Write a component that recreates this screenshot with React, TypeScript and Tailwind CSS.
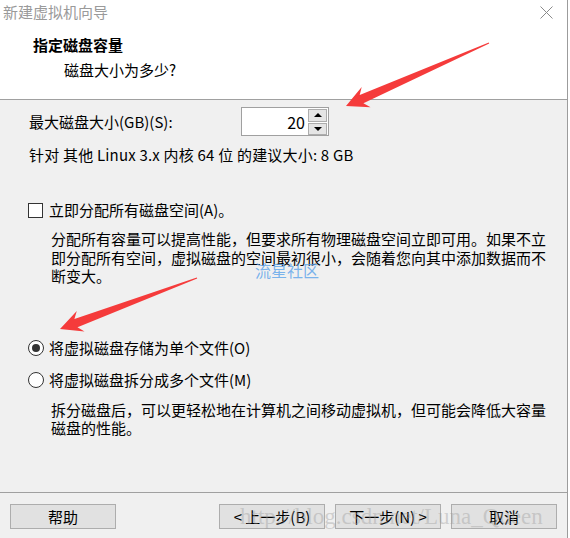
import React from 'react';

const arrowPoints = (tx: number, ty: number, px: number, py: number) => {
    // tip at (px,py), tail at (tx,ty)
    const dx = tx - px;
    const dy = ty - py;
    const len = Math.sqrt(dx * dx + dy * dy);
    const ux = dx / len;
    const uy = dy / len;
    const nx = -uy;
    const ny = ux;
    const pt = (a: number, b: number) => `${(px + ux * a + nx * b).toFixed(1)},${(py + uy * a + ny * b).toFixed(1)}`;
    return [
        pt(0, 0),
        pt(22, -11),
        pt(17, -4.5),
        pt(len, -0.6),
        pt(len, 0.6),
        pt(17, 4.5),
        pt(22, 11),
    ].join(' ');
};

const WizardButton: React.FC<{ label: string; className?: string }> = ({ label, className }) => (
    <button type="button" className={`h-[25px] w-[106px] border border-[#adadad] bg-[#e1e1e1] text-[15px] leading-none text-black ${className ?? ''}`}>
        {label}
    </button>
);

const Radio: React.FC<{ checked?: boolean }> = ({ checked }) => (
    <span className="flex h-[16px] w-[16px] items-center justify-center rounded-full border border-[#333333] bg-white">
        {checked && <span className="h-[8px] w-[8px] rounded-full bg-[#333333]" />}
    </span>
);

const App: React.FC = () => {
    return (
        <div className="relative flex h-[538px] w-[570px] overflow-hidden bg-white font-['Noto_Sans_CJK_SC',sans-serif] text-[15px] text-black">
            <div className="flex h-full w-[568px] flex-col border-r border-[#9c9c9c] bg-[#f0f0f0]">
                {/* header */}
                <div className="flex h-[100px] flex-col border-b border-[#a0a0a0] bg-white">
                    <div className="flex h-[24px] items-center justify-between pl-[3px] pr-[14px]">
                        <span className="leading-[20px] text-[#9a9a9a]">新建虚拟机向导</span>
                        <svg width="13" height="13" viewBox="0 0 13 13">
                            <path d="M0.5 0.5 L12.5 12.5 M12.5 0.5 L0.5 12.5" stroke="#8a8a8a" strokeWidth="1" />
                        </svg>
                    </div>
                    <div className="mt-[11px] pl-[33px] font-bold leading-[20px]">指定磁盘容量</div>
                    <div className="mt-[5px] pl-[64px] leading-[20px]">磁盘大小为多少?</div>
                </div>

                {/* body */}
                <div className="mt-[7px] flex h-[29px] items-center">
                    <span className="w-[241px] shrink-0 pl-[29px] leading-[20px]">最大磁盘大小(GB)(S):</span>
                    <div className="flex h-[29px] w-[88px] items-center border border-[#a0a0a0] bg-white">
                        <span className="flex-1 pr-[3px] text-right text-[16px] leading-[20px]">20</span>
                        <div className="mr-[1px] flex flex-col gap-[1px]">
                            <span className="flex h-[13px] w-[19px] items-center justify-center border border-[#adadad] bg-[#e5e5e5]">
                                <svg width="8" height="4" viewBox="0 0 8 4"><path d="M0 4 L4 0 L8 4 Z" fill="#000" /></svg>
                            </span>
                            <span className="flex h-[12px] w-[19px] items-center justify-center border border-[#adadad] bg-[#e5e5e5]">
                                <svg width="8" height="4" viewBox="0 0 8 4"><path d="M0 0 L8 0 L4 4 Z" fill="#000" /></svg>
                            </span>
                        </div>
                    </div>
                </div>
                <div className="mt-[9px] pl-[29px] leading-[20px] tracking-[0.2px]">针对 其他 Linux 3.x 内核 64 位 的建议大小: 8 GB</div>

                <div className="mt-[35px] flex items-center gap-[6px] pl-[28px] leading-[20px]">
                    <span className="h-[15px] w-[15px] border border-[#333333] bg-white" />
                    <span>立即分配所有磁盘空间(A)。</span>
                </div>
                <p className="mt-[10px] pl-[51px] pr-[20px] leading-[18.5px]">
                    分配所有容量可以提高性能，但要求所有物理磁盘空间立即可用。如果不立即分配所有空间，虚拟磁盘的空间最初很小，会随着您向其中添加数据而不断变大。
                </p>

                <div className="mt-[52px] flex items-center gap-[5px] pl-[28px] leading-[20px]">
                    <Radio checked />
                    <span>将虚拟磁盘存储为单个文件(O)</span>
                </div>
                <div className="mt-[12px] flex items-center gap-[5px] pl-[28px] leading-[20px]">
                    <Radio />
                    <span>将虚拟磁盘拆分成多个文件(M)</span>
                </div>
                <p className="mt-[11px] pl-[51px] pr-[20px] leading-[18.5px]">
                    拆分磁盘后，可以更轻松地在计算机之间移动虚拟机，但可能会降低大容量磁盘的性能。
                </p>

                {/* footer */}
                <div className="mt-auto flex h-[46px] border-t border-[#a0a0a0] pl-[10px] pr-[10px] pt-[11px]">
                    <WizardButton label="帮助" className="w-[104px]" />
                    <div className="flex-1" />
                    <div className="flex gap-[10px]">
                        <WizardButton label="< 上一步(B)" />
                        <WizardButton label="下一步(N) >" />
                        <WizardButton label="取消" />
                    </div>
                </div>
            </div>

            {/* watermarks */}
            <span className="pointer-events-none absolute left-[255px] top-[260px] text-[16px] leading-[20px] text-[#5aa2ea]/80">流星社区</span>
            <span className="pointer-events-none absolute left-[240px] top-[503px] font-['Liberation_Serif',serif] text-[23px] leading-[28px] text-[#9a9a9a]/40">
                http://blog.csdn.net/Luna_Queen
            </span>

            {/* red arrows */}
            <svg className="pointer-events-none absolute left-0 top-0" width="570" height="538">
                <polygon points={arrowPoints(489, 43, 346, 106)} fill="#f53b3b" />
                <polygon points={arrowPoints(197, 278, 60, 329)} fill="#f53b3b" />
            </svg>
        </div>
    );
};

export default App;
